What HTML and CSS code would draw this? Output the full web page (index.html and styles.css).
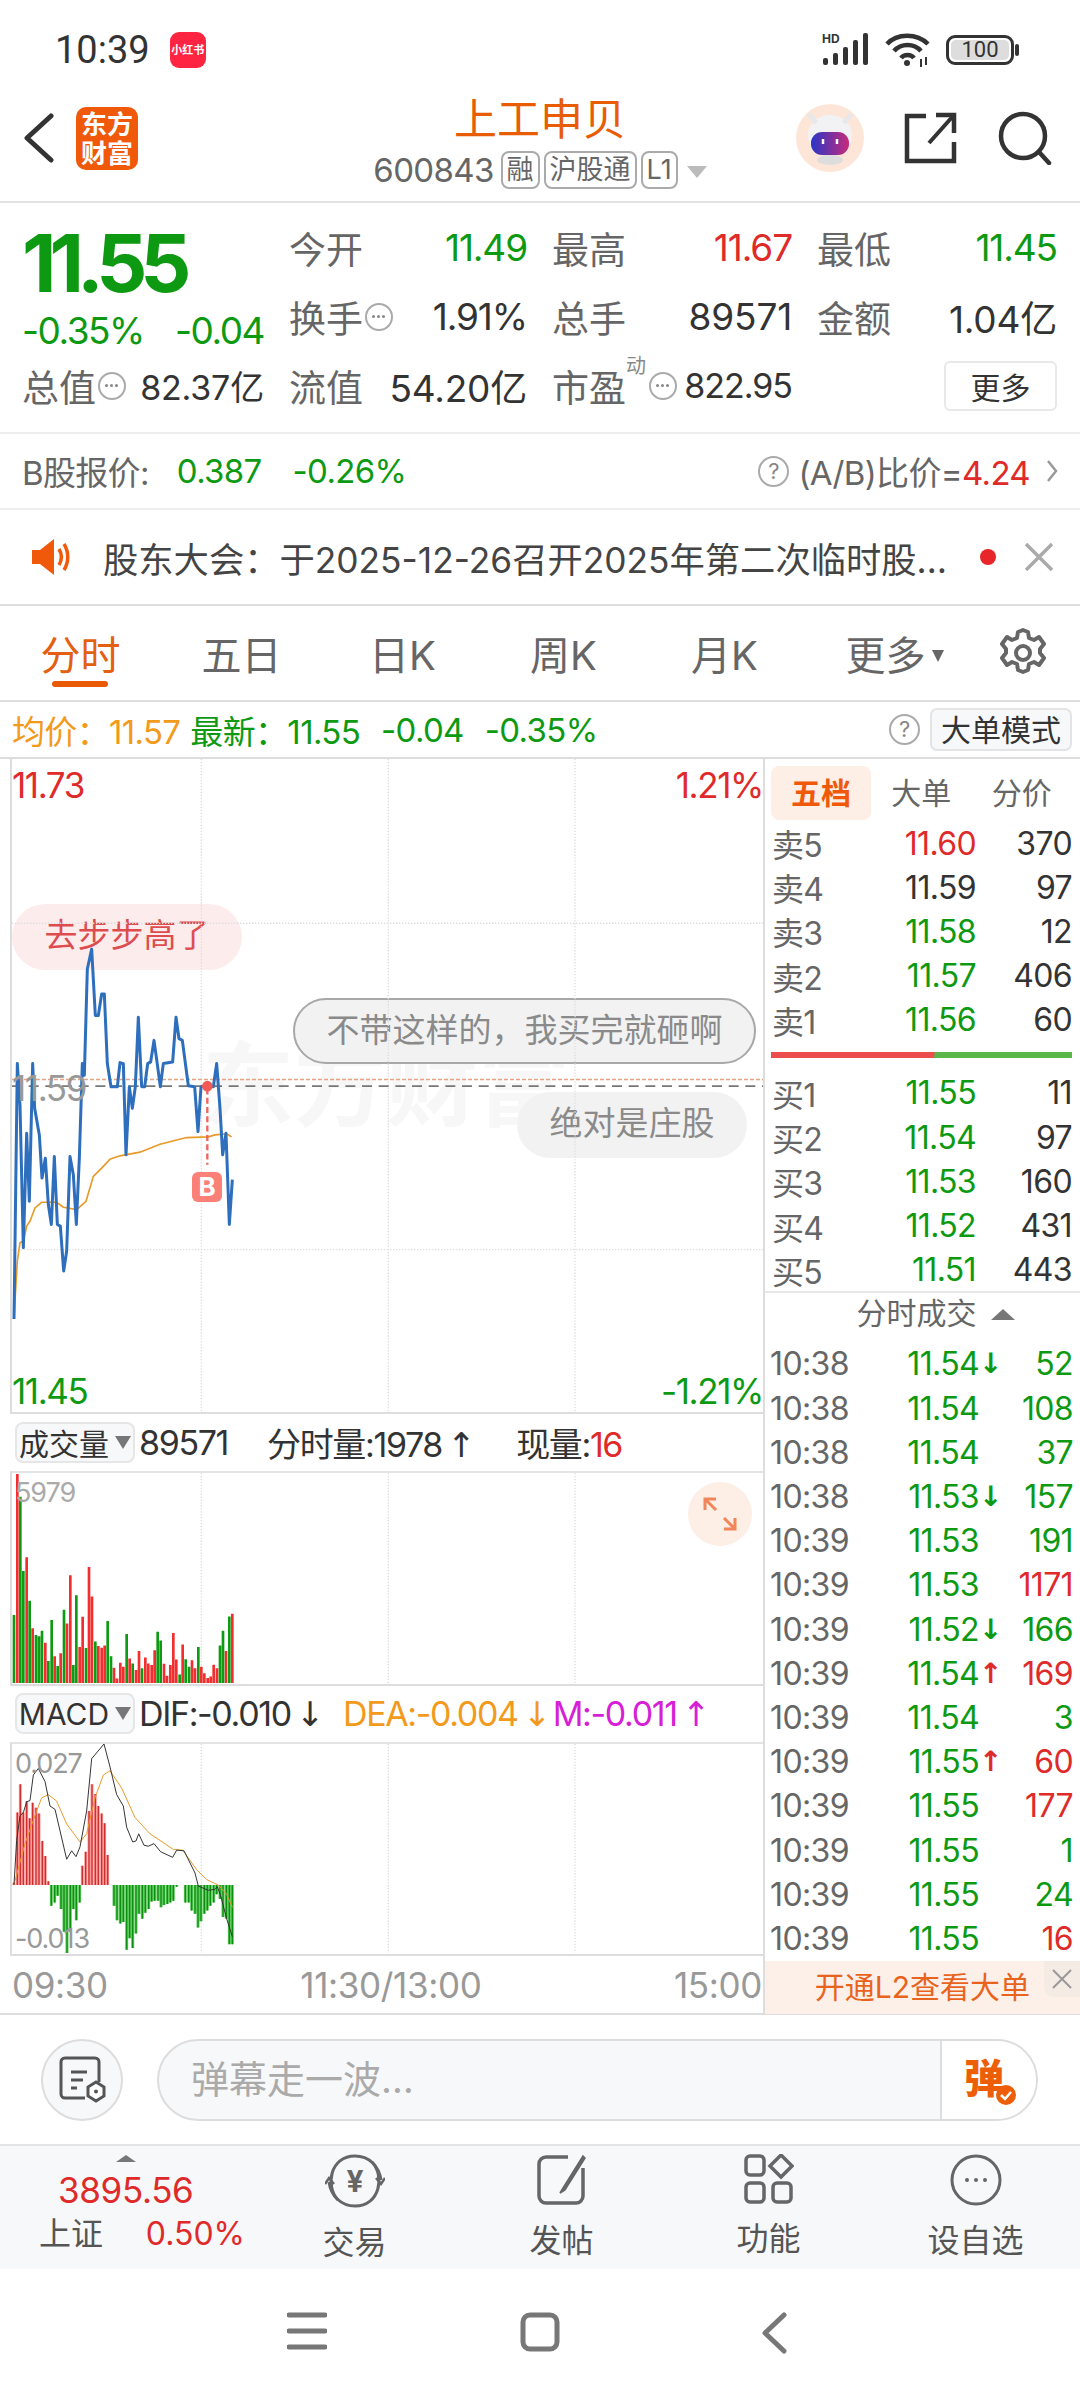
FILE: index.html
```html
<!DOCTYPE html>
<html lang="zh-CN">
<head>
<meta charset="UTF-8">
<meta name="viewport" content="width=device-width, initial-scale=1.0">
<title>上工申贝 分时</title>
<link rel="stylesheet" href="styles.css">
</head>
<body>

<!-- system status bar -->
<div class="statusbar">
  <span class="clock">10:39</span>
  <span class="xhs">小红书</span>
  <span class="status-right">
    <svg width="50" height="36" viewBox="0 0 50 36">
      <text x="0" y="11" class="hd">HD</text>
      <g fill="#333">
        <rect x="1" y="26" width="5" height="7" rx="2"/>
        <rect x="11" y="21" width="5" height="12" rx="2"/>
        <rect x="21" y="15" width="5" height="18" rx="2"/>
        <rect x="31" y="8" width="5" height="25" rx="2"/>
        <rect x="41" y="1" width="5" height="32" rx="2"/>
      </g>
    </svg>
    <svg width="46" height="36" viewBox="0 0 46 36" fill="none" stroke="#333" stroke-width="4.5">
      <path d="M2 12C12 1 32 1 43 12"/>
      <path d="M9 19C16 11 29 11 36 19"/>
      <path d="M16 26C19 22 26 22 29 26"/>
      <circle cx="22" cy="31" r="3" fill="#333" stroke="none"/>
      <path d="M36 27v8M41 25v8" stroke-width="2"/>
    </svg>
    <span class="battery"><span class="battery-level">100</span></span>
  </span>
</div>

<!-- stock header -->
<div class="header">
  <div class="header-left">
    <svg width="32" height="50" viewBox="0 0 32 50" fill="none" stroke="#333" stroke-width="5" stroke-linecap="round" stroke-linejoin="round"><path d="M28 3L4 25l24 22"/></svg>
    <div class="logo">东方<br>财富</div>
  </div>
  <div class="header-mid">
    <div class="stock-name">上工申贝</div>
    <div class="stock-sub">
      <span class="code">600843</span>
      <span class="tag">融</span>
      <span class="tag">沪股通</span>
      <span class="tag">L1</span>
      <span class="tri-down grey"></span>
    </div>
  </div>
  <div class="header-right">
    <svg class="avatar" width="68" height="68" viewBox="0 0 68 68">
      <defs>
        <linearGradient id="visor" x1="0" x2="1">
          <stop offset="0" stop-color="#2a36c8"/><stop offset="1" stop-color="#c62a7a"/>
        </linearGradient>
      </defs>
      <circle cx="34" cy="34" r="34" fill="#fde6d8"/>
      <ellipse cx="34" cy="31" rx="22" ry="20" fill="#f2f2f4"/>
      <path d="M13 10l7 9M55 10l-7 9" stroke="#e8e8ea" stroke-width="5"/>
      <rect x="15" y="28" width="38" height="23" rx="11" fill="url(#visor)"/>
      <path d="M27 40v-5M41 40v-5" stroke="#fff" stroke-width="2.5"/>
      <ellipse cx="34" cy="56" rx="13" ry="5" fill="#ddd"/>
    </svg>
    <svg width="54" height="52" viewBox="0 0 54 52" fill="none" stroke="#333" stroke-width="4.5">
      <path d="M22 4H3v45h47V30"/>
      <path d="M32 3H50V21"/>
      <path d="M50 3L25 31" stroke-width="4"/>
    </svg>
    <svg width="54" height="54" viewBox="0 0 54 54" fill="none" stroke="#333" stroke-width="4.5" stroke-linecap="round">
      <circle cx="25" cy="25" r="22"/>
      <path d="M41 41l10 11"/>
    </svg>
  </div>
</div>

<!-- quote block -->
<div class="quote">
  <div class="quote-main">
    <div class="big-price">11.55</div>
    <div class="big-change"><span>-0.35%</span><span>-0.04</span></div>
  </div>
  <div class="cell"><span class="lab">今开</span><span class="val green">11.49</span></div>
  <div class="cell"><span class="lab">最高</span><span class="val red">11.67</span></div>
  <div class="cell"><span class="lab">最低</span><span class="val green">11.45</span></div>
  <div class="cell"><span class="lab">换手<i class="dots-ico"></i></span><span class="val">1.91%</span></div>
  <div class="cell"><span class="lab">总手</span><span class="val wide">89571</span></div>
  <div class="cell"><span class="lab">金额</span><span class="val wide">1.04亿</span></div>
  <div class="cell"><span class="lab">总值<i class="dots-ico"></i></span><span class="val small wide">82.37亿</span></div>
  <div class="cell"><span class="lab">流值</span><span class="val wide">54.20亿</span></div>
  <div class="cell"><span class="lab">市盈<sup class="dyn">动</sup><i class="dots-ico"></i></span><span class="val small">822.95</span></div>
  <div class="cell cell-end"><button class="more-btn">更多</button></div>
</div>

<div class="brow">
  <span class="brow-lab">B股报价:</span>
  <span class="green brow-num">0.387</span>
  <span class="green brow-num2">-0.26%</span>
  <span class="brow-right">
    <i class="help-ico">?</i>
    <span class="brow-lab">(A/B)比价=<span class="red">4.24</span></span>
    <svg width="12" height="24" viewBox="0 0 12 24" fill="none" stroke="#999" stroke-width="2.5"><path d="M2 2l8 10L2 22"/></svg>
  </span>
</div>

<div class="notice">
  <svg width="42" height="38" viewBox="0 0 42 38">
    <path d="M2 12h8L24 1v36L10 26H2z" fill="#f0590a"/>
    <path d="M29 11c3 5 3 11 0 16M34 6c5 8 5 18 0 26" fill="none" stroke="#f0590a" stroke-width="3.5"/>
  </svg>
  <span class="notice-text">股东大会：于2025-12-26召开2025年第二次临时股…</span>
  <span class="notice-dot"></span>
  <svg width="30" height="28" viewBox="0 0 30 28" stroke="#aaa" stroke-width="3.5"><path d="M2 1l26 26M28 1L2 27"/></svg>
</div>

<!-- period tabs -->
<div class="tabs">
  <span class="tab tab-on">分时</span>
  <span class="tab">五日</span>
  <span class="tab">日K</span>
  <span class="tab">周K</span>
  <span class="tab">月K</span>
  <span class="tab tab-more">更多<i class="tri-down dark"></i></span>
  <svg class="gear" width="48" height="50" viewBox="0 0 48 50" fill="none" stroke="#666" stroke-width="4" stroke-linejoin="round">
    <path d="M24 2l5 2 1 6 5 2 5-3 5 7-4 5v4l4 5-5 7-5-3-5 2-1 6-5 2-5-2-1-6-5-2-5 3-5-7 4-5v-4L3 16l5-7 5 3 5-2 1-6z"/>
    <circle cx="24" cy="25" r="7"/>
  </svg>
</div>

<div class="avgrow">
  <span class="orange">均价：11.57</span>
  <span class="green avg-new">最新：11.55</span>
  <span class="green avg-d">-0.04</span>
  <span class="green avg-d">-0.35%</span>
  <i class="help-ico avg-help">?</i>
  <button class="mode-btn">大单模式</button>
</div>

<div class="main">
  <div class="left-col">
    <!-- price chart -->
    <div class="chart chart-price">
      <div class="watermark">东方财富</div>
      <span class="bubble bubble-red">去步步高了</span>
      <span class="bubble bubble-line">不带这样的，我买完就砸啊</span>
      <span class="bubble bubble-grey">绝对是庄股</span>
      <svg class="chart-svg" viewBox="36 -723 2253 1968" preserveAspectRatio="none">
        <g class="grid">
          <path d="M604 -723V1245M1165 -723V1245M1725 -723V1245M36 -228H2289M36 756H2289"/>
        </g>
        <path d="M36 243H2289" class="line-prev"/>
        <path d="M36 263H2289" class="line-close"/>
        <polyline class="line-avg" points="42,960 52,790 60,735 70,730 80,685 90,670 105,630 125,613 170,613 190,628 230,635 258,610 280,535 305,510 330,483 360,473 420,462 480,438 560,418 625,416 645,410 680,407 695,416"/>
        <polyline class="line-price" points="42,965 52,195 60,320 70,750 80,405 88,610 98,195 104,330 118,410 126,540 136,480 145,620 154,680 163,475 172,680 181,685 191,820 200,760 210,475 220,530 229,680 238,480 247,195 253,230 262,-90 275,-150 286,50 295,50 305,-15 313,-15 322,195 333,265 352,265 360,192 370,195 378,470 388,265 397,330 406,265 415,55 425,265 434,265 443,195 452,190 462,125 471,190 481,265 490,195 518,190 528,55 537,120 547,125 565,262 584,265 594,400 603,265 622,262 640,265 650,195 660,330 668,470 678,405 688,680 697,545"/>
        <path d="M622 270V500" class="line-mark"/>
        <circle cx="622" cy="263" r="16" fill="#f25b55"/>
      </svg>
      <span class="ch-label tl red">11.73</span>
      <span class="ch-label tr red">1.21%</span>
      <span class="ch-label bl green">11.45</span>
      <span class="ch-label br green">-1.21%</span>
      <span class="ch-label mid">11.59</span>
      <span class="b-mark">B</span>
    </div>

    <div class="ind-head">
      <span class="ind-select">成交量<i class="tri-down dark"></i></span>
      <span>89571</span>
      <span class="vol-b">分时量:1978<b class="arrow">↑</b></span>
      <span class="vol-c">现量:<span class="red">16</span></span>
    </div>

    <div class="chart chart-vol">
      <svg class="chart-svg" viewBox="36 217 2253 645" preserveAspectRatio="none">
        <path class="grid" d="M604 217V860M1165 217V860M1725 217V860"/>
        <path class="bar-red" d="M52 860V220M80 860V475M98 860V692M136 860V737M164 860V778M182 860V769M201 860V678M211 860V530M239 860V750M248 860V657M267 860V505M276 860V595M295 860V747M305 860V752M314 860V745M342 860V813M351 860V846M361 860V798M370 860V810M389 860V785M408 860V820M417 860V762M436 860V782M445 860V800M455 860V805M464 860V760M492 860V801M501 860V838M511 860V805M520 860V707M529 860V788M548 860V742M576 860V790M585 860V815M604 860V810M613 860V830M623 860V845M632 860V840M641 860V804M651 860V815M678 860V762M697 860V648"/>
        <path class="bar-green" d="M42 860V652M61 860V290M70 860V517M89 860V608M108 860V713M117 860V717M126 860V700M145 860V793M155 860V667M173 860V808M192 860V636M220 860V805M229 860V591M258 860V753M286 860V733M323 860V670M333 860V778M380 860V710M398 860V800M426 860V815M473 860V703M482 860V730M539 860V834M557 860V787M567 860V810M595 860V750M660 860V745M669 860V700M688 860V656"/>
      </svg>
      <span class="ch-label vol-max">5979</span>
      <span class="expand">
        <svg width="36" height="36" viewBox="0 0 36 36" fill="none" stroke="#f0865a" stroke-width="3">
          <path d="M3 14V3h11M3 3l11 11M33 22v11H22M33 33L22 22"/>
        </svg>
      </span>
    </div>

    <div class="ind-head">
      <span class="ind-select">MACD<i class="tri-down dark"></i></span>
      <span>DIF:-0.010<b class="arrow">↓</b></span>
      <span class="orange dea">DEA:-0.004<b class="arrow">↓</b></span>
      <span class="magenta">M:-0.011<b class="arrow">↑</b></span>
    </div>

    <div class="chart chart-macd">
      <svg class="chart-svg" viewBox="36 195 2253 642" preserveAspectRatio="none">
        <defs>
          <path id="macdUp" d="M42 627V620M52 627V405M61 627V318M70 627V405M80 627V370M89 627V422M98 627V375M108 627V390M117 627V408M127 627V492M136 627V538M145 627V615M247 627V568M257 627V525M267 627V400M276 627V318M286 627V348M295 627V385M305 627V408M314 627V438M323 627V535"/>
          <path id="macdDn" d="M154 627V690M164 627V680M173 627V660M183 627V700M192 627V770M201 627V835M211 627V770M220 627V700M229 627V735M239 627V680M342 627V690M351 627V735M361 627V745M370 627V740M380 627V825M389 627V790M398 627V820M408 627V775M417 627V715M427 627V730M436 627V712M446 627V700M455 627V677M464 627V675M474 627V675M483 627V695M492 627V688M502 627V685M511 627V680M520 627V675M530 627V632M556 627V680M566 627V680M575 627V705M585 627V715M594 627V757M603 627V738M613 627V715M622 627V705M631 627V690M641 627V680M650 627V655M660 627V670M669 627V725M679 627V730M688 627V808M697 627V808"/>
        </defs>
        <path class="grid" d="M604 195V835M1165 195V835M1725 195V835"/>
        <use href="#macdUp" class="macd-up-bg"/>
        <use href="#macdUp" class="macd-up"/>
        <use href="#macdDn" class="macd-dn-bg"/>
        <use href="#macdDn" class="macd-dn"/>
        <polyline class="line-dea" points="42,625 75,500 110,400 125,360 145,350 170,370 200,440 240,495 260,470 285,360 310,290 330,277 365,330 405,420 450,470 490,497 520,518 548,520 590,580 620,610 655,627 680,655 697,695"/>
        <polyline class="line-dif" points="42,625 50,490 60,415 70,405 80,372 90,368 100,290 115,270 135,310 150,385 165,395 200,548 215,522 228,540 240,510 260,400 275,240 312,195 330,265 350,350 370,385 380,450 398,495 408,492 416,470 432,505 445,508 462,500 482,525 518,542 530,520 552,522 585,590 595,630 625,643 645,640 652,632 662,660 680,730 697,785"/>
      </svg>
      <span class="ch-label macd-top">0.027</span>
      <span class="ch-label macd-bot">-0.013</span>
    </div>

    <div class="time-axis"><span>09:30</span><span class="axis-mid">11:30/13:00</span><span>15:00</span></div>
  </div>

  <!-- order book + ticks -->
  <div class="right-col">
    <div class="rtabs">
      <span class="rtab rtab-on">五档</span>
      <span class="rtab">大单</span>
      <span class="rtab">分价</span>
    </div>
    <div class="book">
      <div class="book-row"><span class="book-lab">卖5</span><span class="red">11.60</span><span>370</span></div>
      <div class="book-row"><span class="book-lab">卖4</span><span>11.59</span><span>97</span></div>
      <div class="book-row"><span class="book-lab">卖3</span><span class="green">11.58</span><span>12</span></div>
      <div class="book-row"><span class="book-lab">卖2</span><span class="green">11.57</span><span>406</span></div>
      <div class="book-row"><span class="book-lab">卖1</span><span class="green">11.56</span><span>60</span></div>
    </div>
    <div class="ratio"></div>
    <div class="book">
      <div class="book-row"><span class="book-lab">买1</span><span class="green">11.55</span><span>11</span></div>
      <div class="book-row"><span class="book-lab">买2</span><span class="green">11.54</span><span>97</span></div>
      <div class="book-row"><span class="book-lab">买3</span><span class="green">11.53</span><span>160</span></div>
      <div class="book-row"><span class="book-lab">买4</span><span class="green">11.52</span><span>431</span></div>
      <div class="book-row"><span class="book-lab">买5</span><span class="green">11.51</span><span>443</span></div>
    </div>
    <div class="tick-head">分时成交<i class="tri-up"></i></div>
    <div class="ticks">
      <div class="tick"><span class="t">10:38</span><span class="green">11.54</span><b class="green">↓</b><span class="green">52</span></div>
      <div class="tick"><span class="t">10:38</span><span class="green">11.54</span><b></b><span class="green">108</span></div>
      <div class="tick"><span class="t">10:38</span><span class="green">11.54</span><b></b><span class="green">37</span></div>
      <div class="tick"><span class="t">10:38</span><span class="green">11.53</span><b class="green">↓</b><span class="green">157</span></div>
      <div class="tick"><span class="t">10:39</span><span class="green">11.53</span><b></b><span class="green">191</span></div>
      <div class="tick"><span class="t">10:39</span><span class="green">11.53</span><b></b><span class="red">1171</span></div>
      <div class="tick"><span class="t">10:39</span><span class="green">11.52</span><b class="green">↓</b><span class="green">166</span></div>
      <div class="tick"><span class="t">10:39</span><span class="green">11.54</span><b class="red">↑</b><span class="red">169</span></div>
      <div class="tick"><span class="t">10:39</span><span class="green">11.54</span><b></b><span class="green">3</span></div>
      <div class="tick"><span class="t">10:39</span><span class="green">11.55</span><b class="red">↑</b><span class="red">60</span></div>
      <div class="tick"><span class="t">10:39</span><span class="green">11.55</span><b></b><span class="red">177</span></div>
      <div class="tick"><span class="t">10:39</span><span class="green">11.55</span><b></b><span class="green">1</span></div>
      <div class="tick"><span class="t">10:39</span><span class="green">11.55</span><b></b><span class="green">24</span></div>
      <div class="tick"><span class="t">10:39</span><span class="green">11.55</span><b></b><span class="red">16</span></div>
    </div>
    <div class="l2-ad">开通L2查看大单
      <span class="l2-close">
        <svg width="20" height="20" viewBox="0 0 20 20" stroke="#999" stroke-width="2"><path d="M1 1l18 18M19 1L1 19"/></svg>
      </span>
    </div>
  </div>
</div>

<!-- danmu input -->
<div class="inputrow">
  <span class="round-btn">
    <svg width="48" height="48" viewBox="0 0 48 48" fill="none" stroke="#555" stroke-width="3">
      <path d="M27 42H7a4 4 0 0 1-4-4V6a4 4 0 0 1 4-4h30a4 4 0 0 1 4 4v20"/>
      <path d="M13 16h16M13 24h12M13 32h6"/>
      <path d="M38 26l8 5v9l-8 5-8-5v-9z" fill="#fff"/>
      <circle cx="38" cy="35.500" r="2" fill="#555" stroke="none"/>
    </svg>
  </span>
  <div class="danmu">
    <span class="danmu-hint">弹幕走一波…</span>
    <span class="danmu-send">弹
      <svg class="send-ok" width="20" height="20" viewBox="0 0 20 20">
        <circle cx="10" cy="10" r="10" fill="#ec5f08"/>
        <path d="M5 10l4 4 6-7" fill="none" stroke="#fff" stroke-width="2.500"/>
      </svg>
    </span>
  </div>
</div>

<!-- bottom toolbar -->
<div class="toolbar">
  <div class="index-box">
    <i class="tri-up small"></i>
    <div class="index-val red">3895.56</div>
    <div class="index-sub"><span>上证</span><span class="red">0.50%</span></div>
  </div>
  <div class="tool">
    <svg width="60" height="54" viewBox="0 0 60 54" fill="none" stroke="#666" stroke-width="3">
      <path d="M13 46C0 32 5 2 30 2c14 0 24 10 26 24"/>
      <path d="M47 8c13 14 8 44-17 44-14 0-24-10-26-24"/>
      <path d="M0 30l4-6 5 6M60 24l-4 6-5-6" stroke-width="2.500"/>
      <text x="30" y="38" class="yen">¥</text>
    </svg>
    <span>交易</span>
  </div>
  <div class="tool">
    <svg width="52" height="52" viewBox="0 0 52 52" fill="none" stroke="#666" stroke-width="3.500">
      <path d="M32 3H10a7 7 0 0 0-7 7v32a7 7 0 0 0 7 7h30a7 7 0 0 0 7-7V14"/>
      <path d="M47 2L27 34l-3 5 5-3 20-32z" fill="#666" stroke-width="1.500"/>
    </svg>
    <span>发帖</span>
  </div>
  <div class="tool">
    <svg width="50" height="50" viewBox="0 0 50 50" fill="none" stroke="#666" stroke-width="3.500">
      <rect x="2" y="2" width="18" height="19" rx="4"/>
      <path d="M37 1l11 11-11 11-11-11z"/>
      <rect x="2" y="29" width="18" height="19" rx="4"/>
      <rect x="29" y="29" width="18" height="19" rx="4"/>
    </svg>
    <span>功能</span>
  </div>
  <div class="tool">
    <svg width="52" height="52" viewBox="0 0 52 52" fill="none" stroke="#666" stroke-width="3">
      <circle cx="26" cy="26" r="24"/>
      <circle cx="17" cy="26" r="2" fill="#666" stroke="none"/>
      <circle cx="26" cy="26" r="2" fill="#666" stroke="none"/>
      <circle cx="35" cy="26" r="2" fill="#666" stroke="none"/>
    </svg>
    <span>设自选</span>
  </div>
</div>

<!-- android nav -->
<div class="sysnav">
  <svg width="40" height="38" viewBox="0 0 40 38" stroke="#777" stroke-width="5" stroke-linecap="round"><path d="M2 3h36M2 19h36M2 35h36"/></svg>
  <svg width="40" height="40" viewBox="0 0 40 40" fill="none" stroke="#777" stroke-width="5"><rect x="3" y="3" width="34" height="34" rx="7"/></svg>
  <svg width="26" height="42" viewBox="0 0 26 42" fill="none" stroke="#777" stroke-width="5" stroke-linecap="round" stroke-linejoin="round"><path d="M23 3L4 21l19 18"/></svg>
</div>

</body>
</html>
```

FILE: styles.css
```css
/* page */
* {
  box-sizing: border-box;
}
body {
  margin: 0;
  width: 1080px;
  height: 2400px;
  overflow: hidden;
  background: #fff;
  color: #333;
  font-family: Inter, "Noto Sans CJK SC", "DejaVu Sans", sans-serif;
  font-size: 30px;
}
i, b {
  font-style: normal;
}
button {
  font-family: inherit;
}
.green { color: #0d9a12; }
.red { color: #df2a2a; }
.orange { color: #f29a1c; }
.magenta { color: #d61fd6; }

/* triangles */
.tri-down {
  display: inline-block;
  width: 0;
  height: 0;
  border-left: 8px solid transparent;
  border-right: 8px solid transparent;
  border-top: 13px solid #777;
}
.tri-down.grey {
  border-left-width: 10px;
  border-right-width: 10px;
  border-top: 12px solid #bbb;
}
.tri-up {
  display: inline-block;
  width: 0;
  height: 0;
  border-left: 12px solid transparent;
  border-right: 12px solid transparent;
  border-bottom: 11px solid #777;
  margin-left: 14px;
}
.tri-up.small {
  margin: 0;
  border-left-width: 10px;
  border-right-width: 10px;
  border-bottom: 7px solid #777;
}

/* status bar */
.statusbar {
  height: 75px;
  display: flex;
  align-items: center;
  padding: 24px 66px 0 55px;
}
.clock {
  font-family: Roboto, sans-serif;
  font-size: 38px;
  color: #333;
}
.xhs {
  width: 36px;
  height: 36px;
  margin-left: 20px;
  border-radius: 9px;
  background: #ff2442;
  color: #fff;
  font-size: 11px;
  font-weight: 700;
  line-height: 36px;
  text-align: center;
  white-space: nowrap;
}
.status-right {
  margin-left: auto;
  display: flex;
  align-items: center;
  gap: 13px;
}
.hd {
  font-size: 12px;
  font-weight: 700;
  fill: #333;
}
.battery {
  width: 68px;
  height: 30px;
  border: 3px solid #333;
  border-radius: 9px;
  padding: 2px;
  position: relative;
  margin-left: 2px;
}
.battery::after {
  content: '';
  position: absolute;
  right: -8px;
  top: 6px;
  width: 4px;
  height: 12px;
  background: #333;
  border-radius: 2px;
}
.battery-level {
  display: block;
  height: 100%;
  border-radius: 5px;
  background: #ddd;
  font-family: Roboto, sans-serif;
  font-size: 22px;
  line-height: 20px;
  text-align: center;
}

/* header */
.header {
  height: 128px;
  display: grid;
  grid-template-columns: 1fr auto 1fr;
  align-items: center;
  border-bottom: 2px solid #e2e2e2;
}
.header-left {
  display: flex;
  align-items: center;
  padding-left: 23px;
  gap: 21px;
}
.logo {
  width: 62px;
  height: 63px;
  background: #f0590a;
  border-radius: 10px;
  color: #fff;
  font-size: 26px;
  font-weight: 700;
  line-height: 29px;
  text-align: center;
  padding-top: 3px;
}
.header-mid {
  text-align: center;
  padding-top: 4px;
}
.stock-name {
  font-size: 43px;
  line-height: 60px;
  color: #e85d04;
}
.stock-sub {
  display: flex;
  align-items: center;
  gap: 4px;
  height: 42px;
}
.code {
  font-size: 33px;
  letter-spacing: -0.02em;
  color: #666;
  margin-right: 3px;
}
.tag {
  height: 38px;
  line-height: 33px;
  padding: 0 4px;
  border: 2px solid #aaa;
  border-radius: 8px;
  font-size: 27px;
  color: #666;
}
.stock-sub .tri-down {
  margin-left: 5px;
  margin-top: 4px;
}
.header-right {
  display: flex;
  align-items: center;
  justify-content: flex-end;
  padding-right: 28px;
  gap: 40px;
}

/* quote */
.quote {
  height: 231px;
  padding: 10px 22px 0 22px;
  display: grid;
  grid-template-columns: 242px 238px 240px 240px;
  grid-template-rows: repeat(3, 69px);
  column-gap: 25px;
  font-size: 37px;
  border-bottom: 2px solid #eee;
}
.quote-main {
  grid-row: 1 / span 2;
  color: #0d9a12;
}
.big-price {
  font-size: 80px;
  font-weight: 700;
  line-height: 76px;
  letter-spacing: -7px;
  margin-top: 12px;
}
.big-change {
  display: flex;
  justify-content: space-between;
  font-size: 37px;
  letter-spacing: -0.04em;
  margin-top: 8px;
  line-height: 44px;
}
.cell {
  display: flex;
  align-items: center;
  justify-content: space-between;
  white-space: nowrap;
}
.cell-end {
  justify-content: flex-end;
}
.lab {
  color: #666;
  display: flex;
  align-items: center;
  position: relative;
}
.val {
  letter-spacing: -0.03em;
}
.val.wide {
  letter-spacing: -0.005em;
}
.val.small {
  font-size: 34px;
}
.dots-ico {
  width: 28px;
  height: 28px;
  margin-left: 2px;
  border: 2px solid #aaa;
  border-radius: 50%;
  position: relative;
}
.dots-ico::after {
  content: '';
  position: absolute;
  left: 10px;
  top: 10px;
  width: 3px;
  height: 3px;
  border-radius: 50%;
  background: #888;
  box-shadow: -5px 0 #888, 5px 0 #888;
}
.dyn {
  position: absolute;
  left: 74px;
  top: -3px;
  font-size: 20px;
  line-height: 20px;
  color: #888;
}
.dyn + .dots-ico {
  margin-left: 23px;
}
.more-btn {
  width: 113px;
  height: 50px;
  padding: 0;
  background: #fff;
  border: 2px solid #e8e8e8;
  border-radius: 6px;
  color: #333;
  font-size: 30px;
}

/* B share row */
.brow {
  height: 76px;
  display: flex;
  align-items: center;
  padding: 0 22px;
  font-size: 33px;
  letter-spacing: -0.02em;
  border-bottom: 2px solid #eee;
}
.brow-lab {
  color: #666;
}
.brow-num {
  margin-left: 28px;
}
.brow-num2 {
  margin-left: 31px;
}
.brow-right {
  margin-left: auto;
  display: flex;
  align-items: center;
  gap: 9px;
}
.help-ico {
  width: 31px;
  height: 31px;
  border: 2px solid #aaa;
  border-radius: 50%;
  color: #888;
  font-size: 22px;
  line-height: 27px;
  text-align: center;
  letter-spacing: 0;
}
.brow-right svg {
  margin-left: 7px;
}

/* notice */
.notice {
  height: 96px;
  display: flex;
  align-items: center;
  padding: 0 26px 0 30px;
  border-bottom: 2px solid #ddd;
}
.notice-text {
  font-size: 35.300px;
  color: #444;
  margin-left: 31px;
  white-space: nowrap;
}
.notice-dot {
  width: 16px;
  height: 16px;
  border-radius: 50%;
  background: #e8262a;
  margin-left: auto;
  margin-right: 28px;
}

/* tabs */
.tabs {
  height: 96px;
  display: flex;
  align-items: center;
  position: relative;
  border-bottom: 2px solid #ddd;
}
.tab {
  position: relative;
  width: 161px;
  text-align: center;
  font-size: 40px;
  color: #666;
  white-space: nowrap;
}
.tab-more {
  padding-left: 18px;
}
.tab .tri-down {
  margin-left: 6px;
  vertical-align: 8px;
  border-left-width: 6px;
  border-right-width: 6px;
  border-top-width: 12px;
  border-top-color: #666;
}
.tab-on {
  color: #e35f12;
}
.tab-on::after {
  content: '';
  position: absolute;
  left: 52px;
  top: 57px;
  width: 56px;
  height: 6px;
  border-radius: 3px;
  background: #e85a06;
}
.gear {
  margin-left: auto;
  margin-right: 33px;
}

/* average row */
.avgrow {
  height: 57px;
  display: flex;
  align-items: center;
  padding: 0 8px 0 12px;
  font-size: 33px;
  letter-spacing: -0.02em;
  border-bottom: 2px solid #ddd;
}
.avg-new {
  margin-left: 10px;
}
.avg-d {
  margin-left: 21px;
}
.avg-help {
  margin-left: auto;
  margin-right: 10px;
}
.mode-btn {
  width: 142px;
  height: 43px;
  padding: 0;
  background: #f7f8fa;
  border: 2px solid #e4e4e4;
  border-radius: 7px;
  color: #333;
  font-size: 30px;
  line-height: 38px;
  letter-spacing: 0;
}

/* main split */
.main {
  height: 1256px;
  display: flex;
  border-bottom: 2px solid #ddd;
}
.left-col {
  width: 763px;
  display: flex;
  flex-direction: column;
}
.right-col {
  width: 317px;
  border-left: 2px solid #ddd;
}

/* charts */
.chart {
  position: relative;
  margin-left: 10px;
  border-left: 2px solid #ddd;
  border-bottom: 2px solid #ddd;
  overflow: hidden;
}
.chart-price {
  height: 656px;
}
.chart-vol {
  height: 215px;
  border-top: 2px solid #e4e4e4;
}
.chart-macd {
  height: 214px;
  border-top: 2px solid #e4e4e4;
}
.chart-svg {
  display: block;
  width: 751px;
  height: 100%;
  position: absolute;
  left: 0;
  top: 0;
}
.grid, .grid path {
  fill: none;
  stroke: #ddd;
  stroke-width: 4;
  stroke-dasharray: 4 5;
}
.line-prev {
  fill: none;
  stroke: #e6a582;
  stroke-width: 5;
  stroke-dasharray: 12 6;
}
.line-close {
  fill: none;
  stroke: #777;
  stroke-width: 5;
  stroke-dasharray: 30 20;
}
.line-price {
  fill: none;
  stroke: #2e6fbd;
  stroke-width: 9;
  stroke-linejoin: round;
}
.line-avg {
  fill: none;
  stroke: #e89a28;
  stroke-width: 5;
}
.line-mark {
  fill: none;
  stroke: #f0625c;
  stroke-width: 7;
  stroke-dasharray: 18 10;
}
.line-dif {
  fill: none;
  stroke: #333;
  stroke-width: 3;
}
.line-dea {
  fill: none;
  stroke: #e89a28;
  stroke-width: 3;
}
.bar-red {
  fill: none;
  stroke: #f22e2e;
  stroke-width: 8;
}
.bar-green {
  fill: none;
  stroke: #0e9a12;
  stroke-width: 8;
}
.macd-up-bg {
  stroke: #ff9a9a;
  stroke-width: 9;
}
.macd-up {
  stroke: #c9302f;
  stroke-width: 4;
}
.macd-dn-bg {
  stroke: #5fca5f;
  stroke-width: 9;
}
.macd-dn {
  stroke: #0c910f;
  stroke-width: 4;
}
.watermark {
  position: absolute;
  left: 190px;
  top: 272px;
  font-size: 92px;
  font-weight: 700;
  line-height: 110px;
  color: #f7f7f7;
  white-space: nowrap;
}
.ch-label {
  position: absolute;
  font-size: 35px;
  letter-spacing: -0.04em;
  line-height: 40px;
}
.tl { left: 0; top: 6px; }
.tr { right: 0; top: 6px; }
.bl { left: 0; top: 612px; }
.br { right: 0; top: 612px; }
.mid {
  left: 0;
  top: 309px;
  color: #999;
}
.b-mark {
  position: absolute;
  left: 180px;
  top: 413px;
  width: 30px;
  height: 30px;
  border-radius: 6px;
  background: #fb8078;
  color: #fff;
  font-size: 26px;
  font-weight: 700;
  line-height: 30px;
  text-align: center;
}
.bubble {
  position: absolute;
  height: 66px;
  border-radius: 33px;
  line-height: 62px;
  font-size: 33px;
  text-align: center;
  white-space: nowrap;
}
.bubble-red {
  left: 0;
  top: 145px;
  width: 230px;
  background: #fdecec;
  color: #dd4d50;
}
.bubble-line {
  left: 281px;
  top: 239px;
  width: 463px;
  background: #f2f2f2;
  border: 2px solid #a8a8a8;
  color: #8a8a8a;
  line-height: 60px;
}
.bubble-grey {
  left: 505px;
  top: 333px;
  width: 230px;
  background: #f2f2f2;
  color: #8a8a8a;
}
.vol-max {
  left: 3px;
  top: 0;
  font-size: 27px;
  color: #aaa;
}
.expand {
  position: absolute;
  left: 676px;
  top: 9px;
  width: 64px;
  height: 64px;
  border-radius: 50%;
  background: #fdeee6;
  display: flex;
  align-items: center;
  justify-content: center;
}
.macd-top {
  left: 3px;
  top: 0;
  font-size: 27px;
  color: #999;
}
.macd-bot {
  left: 3px;
  top: 175px;
  font-size: 27px;
  color: #999;
}

/* indicator header rows */
.ind-head {
  height: 57px;
  display: flex;
  align-items: center;
  padding-left: 15px;
  font-size: 34px;
  letter-spacing: -0.04em;
  color: #333;
  white-space: nowrap;
}
.ind-select {
  width: 120px;
  height: 41px;
  margin-right: 4px;
  display: flex;
  align-items: center;
  justify-content: center;
  gap: 6px;
  background: #f7f8fa;
  border: 2px solid #e6e6e6;
  border-radius: 8px;
  font-size: 30px;
  letter-spacing: 0;
}
.arrow {
  font-weight: 400;
  font-family: "DejaVu Sans", sans-serif;
  margin-left: 5px;
}
.vol-b { margin-left: 39px; }
.vol-c { margin-left: 42px; }
.dea { margin-left: 20px; }
.magenta { margin-left: 3px; }

.time-axis {
  height: 57px;
  display: flex;
  align-items: center;
  justify-content: space-between;
  padding: 0 1px 0 12px;
  font-size: 35px;
  letter-spacing: -0.01em;
  color: #999;
}

/* right panel */
.rtabs {
  height: 61px;
  padding: 7px 8px 0 6px;
  display: flex;
  align-items: stretch;
}
.rtab {
  flex: 1;
  text-align: center;
  line-height: 54px;
  color: #666;
  font-size: 30px;
}
.rtab-on {
  background: #fdefe6;
  border-radius: 8px;
  color: #f0590a;
  font-weight: 700;
  flex: none;
  width: 100px;
}
.book-row {
  height: 44.200px;
  display: grid;
  grid-template-columns: 88px 116px 96px;
  align-items: center;
  padding-left: 7px;
  font-size: 32px;
  letter-spacing: -0.02em;
  text-align: right;
}
.book-lab {
  text-align: left;
  color: #666;
}
.ratio {
  height: 6px;
  margin: 11px 8px 12px 6px;
  background: linear-gradient(100deg, #ec4e4e 54%, #5ab84a 54.500%);
}
.tick-head {
  height: 51px;
  padding-left: 26px;
  border-top: 2px solid #e8e8e8;
  text-align: center;
  color: #666;
  font-size: 30px;
  line-height: 40px;
}
.tick-head .tri-up {
  vertical-align: 4px;
}
.tick {
  height: 44.200px;
  display: grid;
  grid-template-columns: 100px 1fr 20px 74px;
  align-items: center;
  padding: 0 7px 0 5px;
  font-size: 32px;
  letter-spacing: -0.02em;
  text-align: right;
}
.tick .t {
  text-align: left;
  color: #666;
}
.tick b {
  font-size: 28px;
  font-weight: 700;
  text-align: center;
  font-family: "DejaVu Sans", sans-serif;
}
.l2-ad {
  position: relative;
  height: 53px;
  background: #fdf0e8;
  color: #e8641e;
  font-size: 30px;
  line-height: 53px;
  text-align: center;
}
.l2-close {
  position: absolute;
  right: 0;
  top: 0;
  width: 36px;
  height: 36px;
  background: #f4ebe5;
  border-bottom-left-radius: 10px;
  display: flex;
  align-items: center;
  justify-content: center;
}

/* danmu input row */
.inputrow {
  height: 129px;
  display: flex;
  align-items: center;
  padding: 0 42px 0 41px;
  gap: 34px;
}
.round-btn {
  width: 82px;
  height: 82px;
  flex: none;
  border: 2px solid #ddd;
  border-radius: 50%;
  background: #f7f8fa;
  display: flex;
  align-items: center;
  justify-content: center;
}
.danmu {
  flex: 1;
  height: 82px;
  display: flex;
  border: 2px solid #ddd;
  border-radius: 41px;
  background: #f7f8fa;
  overflow: hidden;
}
.danmu-hint {
  flex: 1;
  padding-left: 32px;
  color: #aaa;
  font-size: 38px;
  line-height: 76px;
}
.danmu-send {
  position: relative;
  width: 96px;
  border-left: 2px solid #ddd;
  background: #fff;
  color: #ec5f08;
  font-size: 40px;
  font-weight: 900;
  line-height: 76px;
  padding-left: 22px;
}
.send-ok {
  position: absolute;
  left: 54px;
  top: 44px;
}

/* bottom toolbar */
.toolbar {
  height: 125px;
  display: flex;
  background: #f7f8fa;
  border-top: 2px solid #e4e4e4;
}
.index-box {
  width: 251px;
  padding: 9px 0 0 39px;
}
.index-box .tri-up {
  display: block;
  margin: 0 0 0 77px;
}
.index-val {
  font-size: 35px;
  letter-spacing: -0.01em;
  line-height: 40px;
  margin: 8px 0 0 19px;
}
.index-sub {
  display: flex;
  justify-content: space-between;
  width: 206px;
  font-size: 32px;
  line-height: 46px;
  color: #555;
  margin-top: 1px;
}
.tool {
  width: 207px;
  display: flex;
  flex-direction: column;
  align-items: center;
  padding-top: 8px;
  gap: 12px;
  color: #555;
  font-size: 32px;
  line-height: 46px;
}
.yen {
  fill: #666;
  stroke: none;
  font-size: 30px;
  font-weight: 700;
  text-anchor: middle;
}

/* system nav */
.sysnav {
  height: 130px;
  display: flex;
  align-items: flex-start;
  padding: 43px 0 0 287px;
}
.sysnav svg:nth-child(2) {
  margin-left: 193px;
}
.sysnav svg:nth-child(3) {
  margin-left: 201px;
}
```
